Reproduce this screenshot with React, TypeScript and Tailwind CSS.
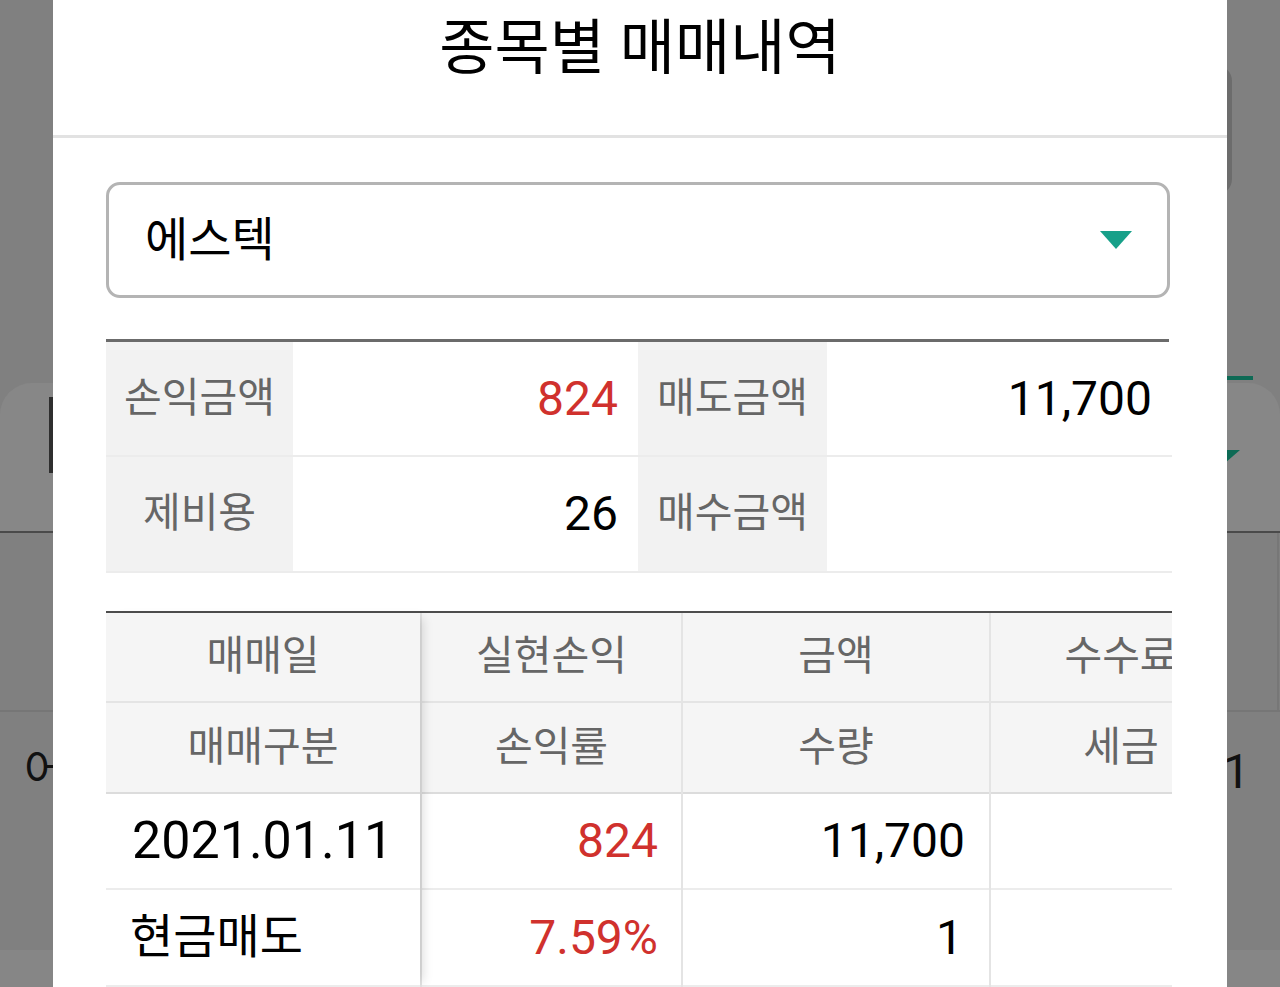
export default function App() {
  return (
    <div className="relative h-[987px] w-[1280px] overflow-hidden bg-[#808080] font-['Roboto','Noto_Sans_CJK_KR',sans-serif]">
      {/* dimmed page behind the dialog */}
      <div className="flex h-full flex-col">
        <div className="flex h-[376px] justify-end pt-[65px]">
          <div className="mr-[48px] h-[130px] w-[220px] rounded-[16px] border-[5px] border-[#6c6c6c]" />
        </div>
        <div className="flex h-[7px] justify-end">
          <div className="mr-[27px] h-[4px] w-[28px] bg-[#0e6a55]" />
        </div>
        <div className="flex h-[148px] items-start justify-between rounded-t-[32px] bg-[#878787]">
          <div className="ml-[49px] mt-[14px] h-[76px] w-[4px] bg-[#2e2e2e]" />
          <svg width="30" height="13" viewBox="0 0 30 13" className="mr-[40px] mt-[67px]">
            <polygon points="0,0 30,0 15,13" fill="#0e6a55" />
          </svg>
        </div>
        <div className="h-[2px] bg-[#4a4a4a]" />
        <div className="flex h-[177px] justify-end">
          <div className="mr-[1px] h-full w-[2px] bg-[#777]" />
        </div>
        <div className="h-[2px] bg-[#767676]" />
        <div className="flex h-[238px] items-start justify-between pt-[30px] leading-[60px]">
          <span className="pl-[24px] text-[45px] text-[#111]">어</span>
          <span className="pr-[30px] text-[48px] text-[#111]">1</span>
        </div>
        <div className="flex-1 bg-[#868686]" />
      </div>

      {/* dialog */}
      <div className="absolute left-[53px] top-0 flex h-[987px] w-[1174px] flex-col bg-white">
        <div className="h-[138px] border-b-[3px] border-[#e2e2e2] pt-[14px] text-center text-[60px] leading-[70px] text-black">
          종목별 매매내역
        </div>

        <div className="flex flex-col pl-[53px] pr-[55px] pt-[44px]">
          {/* select */}
          <div className="mr-[2px] flex h-[116px] items-center justify-between rounded-[14px] border-[3px] border-[#b4b4b4] pl-[36px] pr-[35px]">
            <span className="text-[47px] text-black">에스텍</span>
            <svg width="32" height="18" viewBox="0 0 32 18">
              <polygon points="0,0 32,0 16,18" fill="#17a089" />
            </svg>
          </div>

          {/* summary */}
          <div className="mt-[41px] mr-[3px] border-t-[3px] border-[#6b6b6b]">
            <div className="-mr-[3px] flex h-[115px] border-b-2 border-[#ececec]">
              <div className="flex w-[187px] items-center justify-center bg-[#f2f2f2] text-[41px] text-[#666]">손익금액</div>
              <div className="flex w-[345px] items-center justify-end pr-[20px] text-[48px] text-[#d0312d]">824</div>
              <div className="flex w-[189px] items-center justify-center bg-[#f2f2f2] text-[41px] text-[#666]">매도금액</div>
              <div className="flex flex-1 items-center justify-end pr-[20px] text-[48px] text-black">11,700</div>
            </div>
            <div className="-mr-[3px] flex h-[116px] border-b-2 border-[#ececec]">
              <div className="flex w-[187px] items-center justify-center bg-[#f2f2f2] text-[41px] text-[#666]">제비용</div>
              <div className="flex w-[345px] items-center justify-end pr-[20px] text-[48px] text-black">26</div>
              <div className="flex w-[189px] items-center justify-center bg-[#f2f2f2] text-[41px] text-[#666]">매수금액</div>
              <div className="flex flex-1 items-center justify-end pr-[20px] text-[48px] text-black" />
            </div>
          </div>

          {/* trades table */}
          <div className="mt-[38px] flex border-t-2 border-[#4d4d4d]">
            {/* frozen first column */}
            <div className="relative z-10 flex w-[314px] shrink-0 flex-col shadow-[8px_0_10px_-5px_rgba(0,0,0,0.14)]">
              <div className="flex h-[90px] items-center justify-center border-b-2 border-[#e4e4e4] bg-[#f5f5f5] text-[41px] text-[#666]">매매일</div>
              <div className="flex h-[91px] items-center justify-center border-b-2 border-[#dcdcdc] bg-[#f5f5f5] text-[41px] text-[#666]">매매구분</div>
              <div className="flex h-[96px] items-center border-b-2 border-[#ececec] bg-white pl-[26px] text-[52px] text-black">2021.01.11</div>
              <div className="flex h-[97px] items-center border-b-2 border-[#ececec] bg-white pl-[24px] text-[47px] text-black">현금매도</div>
            </div>
            {/* scrolling columns */}
            <div className="flex flex-1 overflow-hidden">
              <div className="flex w-[261px] shrink-0 flex-col border-l-2 border-[#e4e4e4]">
                <div className="flex h-[90px] items-center justify-center border-b-2 border-[#e4e4e4] bg-[#f5f5f5] text-[41px] text-[#666]">실현손익</div>
                <div className="flex h-[91px] items-center justify-center border-b-2 border-[#dcdcdc] bg-[#f5f5f5] text-[41px] text-[#666]">손익률</div>
                <div className="flex h-[96px] items-center justify-end border-b-2 border-[#ececec] pr-[23px] text-[48px] text-[#d0312d]">824</div>
                <div className="flex h-[97px] items-center justify-end border-b-2 border-[#ececec] pr-[23px] text-[48px] text-[#d0312d]">7.59%</div>
              </div>
              <div className="flex w-[308px] shrink-0 flex-col border-l-2 border-[#e4e4e4]">
                <div className="flex h-[90px] items-center justify-center border-b-2 border-[#e4e4e4] bg-[#f5f5f5] text-[41px] text-[#666]">금액</div>
                <div className="flex h-[91px] items-center justify-center border-b-2 border-[#dcdcdc] bg-[#f5f5f5] text-[41px] text-[#666]">수량</div>
                <div className="flex h-[96px] items-center justify-end border-b-2 border-[#ececec] pr-[24px] text-[48px] text-black">11,700</div>
                <div className="flex h-[97px] items-center justify-end border-b-2 border-[#ececec] pr-[26px] text-[48px] text-black">1</div>
              </div>
              <div className="flex w-[262px] shrink-0 flex-col border-l-2 border-[#e4e4e4]">
                <div className="flex h-[90px] items-center justify-center border-b-2 border-[#e4e4e4] bg-[#f5f5f5] text-[41px] text-[#666]">수수료</div>
                <div className="flex h-[91px] items-center justify-center border-b-2 border-[#dcdcdc] bg-[#f5f5f5] text-[41px] text-[#666]">세금</div>
                <div className="h-[96px] border-b-2 border-[#ececec]" />
                <div className="h-[97px] border-b-2 border-[#ececec]" />
              </div>
            </div>
          </div>
        </div>
      </div>
    </div>
  );
}
